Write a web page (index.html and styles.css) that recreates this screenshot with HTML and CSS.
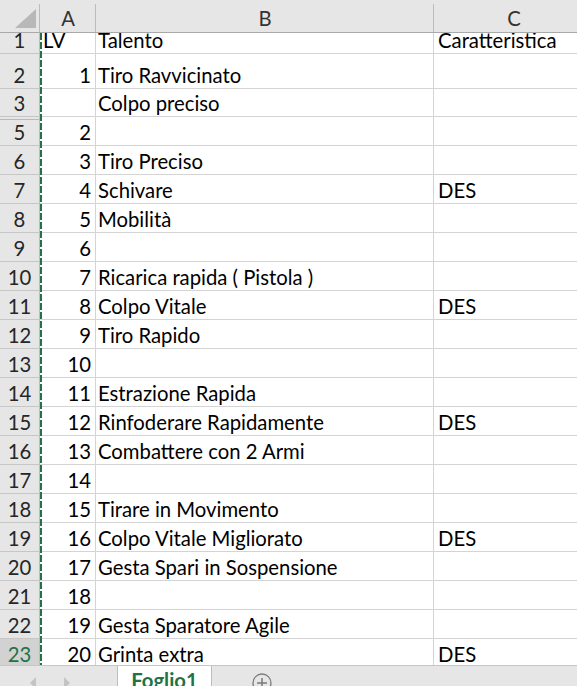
FILE: index.html
```html
<!DOCTYPE html>
<html lang="it">
<head>
<meta charset="utf-8">
<title>Foglio1</title>
<link rel="stylesheet" href="styles.css">
</head>
<body>
<div class="app">
  <div class="sheet">
    <div class="marquee"></div>
    <div class="row head">
      <div class="rh corner"><span class="tri"></span></div>
      <div class="ch">A</div>
      <div class="ch">B</div>
      <div class="ch">C</div>
    </div>
    <div class="row h21"><div class="rh">1</div><div class="c a left">LV</div><div class="c b">Talento</div><div class="c cc">Caratteristica</div></div>
    <div class="row h35"><div class="rh">2</div><div class="c a">1</div><div class="c b">Tiro Ravvicinato</div><div class="c cc"></div></div>
    <div class="row h28"><div class="rh">3</div><div class="c a"></div><div class="c b">Colpo preciso</div><div class="c cc"></div></div>
    <div class="row"><div class="rh hidden-above">5</div><div class="c a">2</div><div class="c b"></div><div class="c cc"></div></div>
    <div class="row"><div class="rh">6</div><div class="c a">3</div><div class="c b">Tiro Preciso</div><div class="c cc"></div></div>
    <div class="row"><div class="rh">7</div><div class="c a">4</div><div class="c b">Schivare</div><div class="c cc">DES</div></div>
    <div class="row"><div class="rh">8</div><div class="c a">5</div><div class="c b">Mobilità</div><div class="c cc"></div></div>
    <div class="row"><div class="rh">9</div><div class="c a">6</div><div class="c b"></div><div class="c cc"></div></div>
    <div class="row"><div class="rh">10</div><div class="c a">7</div><div class="c b">Ricarica rapida ( Pistola )</div><div class="c cc"></div></div>
    <div class="row"><div class="rh">11</div><div class="c a">8</div><div class="c b">Colpo Vitale</div><div class="c cc">DES</div></div>
    <div class="row"><div class="rh">12</div><div class="c a">9</div><div class="c b">Tiro Rapido</div><div class="c cc"></div></div>
    <div class="row"><div class="rh">13</div><div class="c a">10</div><div class="c b"></div><div class="c cc"></div></div>
    <div class="row"><div class="rh">14</div><div class="c a">11</div><div class="c b">Estrazione Rapida</div><div class="c cc"></div></div>
    <div class="row"><div class="rh">15</div><div class="c a">12</div><div class="c b">Rinfoderare Rapidamente</div><div class="c cc">DES</div></div>
    <div class="row"><div class="rh">16</div><div class="c a">13</div><div class="c b">Combattere con 2 Armi</div><div class="c cc"></div></div>
    <div class="row"><div class="rh">17</div><div class="c a">14</div><div class="c b"></div><div class="c cc"></div></div>
    <div class="row"><div class="rh">18</div><div class="c a">15</div><div class="c b">Tirare in Movimento</div><div class="c cc"></div></div>
    <div class="row"><div class="rh">19</div><div class="c a">16</div><div class="c b">Colpo Vitale Migliorato</div><div class="c cc">DES</div></div>
    <div class="row"><div class="rh">20</div><div class="c a">17</div><div class="c b">Gesta Spari in Sospensione</div><div class="c cc"></div></div>
    <div class="row"><div class="rh">21</div><div class="c a">18</div><div class="c b"></div><div class="c cc"></div></div>
    <div class="row"><div class="rh">22</div><div class="c a">19</div><div class="c b">Gesta Sparatore Agile</div><div class="c cc"></div></div>
    <div class="row"><div class="rh active">23</div><div class="c a">20</div><div class="c b">Grinta extra</div><div class="c cc">DES</div></div>
    <div class="row"><div class="rh">24</div><div class="c a"></div><div class="c b"></div><div class="c cc"></div></div>
  </div>
  <div class="tabbar">
    <div class="nav">
      <span class="arrow arrow-left"></span>
      <span class="arrow arrow-right"></span>
    </div>
    <div class="tab">Foglio1</div>
    <div class="add">
      <svg width="20" height="20" viewBox="0 0 20 20"><circle cx="10" cy="10" r="9" fill="none" stroke="#7a7a7a" stroke-width="1.3"/><path d="M10 5v10M5 10h10" stroke="#7a7a7a" stroke-width="1.5"/></svg>
    </div>
  </div>
</div>
</body>
</html>
```

FILE: styles.css
```css
* { box-sizing: border-box; }
html, body { margin: 0; padding: 0; }
body {
  width: 577px;
  height: 686px;
  overflow: hidden;
  background: #fff;
  font-family: "Lato", "Liberation Sans", sans-serif;
  font-size: 20.3px;
  color: #000;
}
.app {
  display: flex;
  flex-direction: column;
  height: 686px;
  overflow: hidden;
}
.sheet {
  position: relative;
  height: 665px;
  overflow: hidden;
  flex: none;
}
.row {
  display: grid;
  grid-template-columns: 40px 56px 338px 160px;
  grid-template-rows: 100%;
  height: 29px;
}
.row > div { min-height: 0; }
.row.head { height: 33px; background: #e6e6e6; }
.row.h21 { height: 21px; }
.row.h35 { height: 35px; }
.row.h28 { height: 28px; }

.rh {
  background: #e6e6e6;
  border-right: 1px solid #bcbcbc;
  border-bottom: 1px solid #c6c6c6;
  display: flex;
  align-items: flex-end;
  justify-content: center;
  padding-bottom: 3px;
  color: #262626;
  line-height: 1;
}
.rh.hidden-above {
  box-shadow: inset 0 2px 0 #e6e6e6, inset 0 3px 0 #b9b9b9;
}
.rh.active {
  background: #d2d2d2;
  color: #217346;
  border-bottom-color: #9f9f9f;
}
.corner {
  border-bottom: 1px solid #a9a9a9;
  border-right: none;
  position: relative;
  padding: 0;
}
.corner::after {
  content: "";
  position: absolute;
  right: 0;
  top: 4px;
  bottom: 0;
  width: 1px;
  background: #bcbcbc;
}
.tri {
  position: absolute;
  left: 15px;
  top: 9px;
  width: 0;
  height: 0;
  border-left: 21px solid transparent;
  border-bottom: 19px solid #b8b8b8;
}
.ch {
  position: relative;
  border-bottom: 1px solid #a9a9a9;
  display: flex;
  align-items: flex-end;
  justify-content: center;
  padding-bottom: 4px;
  color: #333;
  line-height: 1;
}
.ch::after {
  content: "";
  position: absolute;
  right: 0;
  top: 4px;
  bottom: 0;
  width: 1px;
  background: #bcbcbc;
}
.c {
  border-right: 1px solid #d4d4d4;
  border-bottom: 1px solid #d4d4d4;
  display: flex;
  align-items: flex-end;
  padding: 0 2px 3px 2px;
  line-height: 1;
  white-space: nowrap;
}
.c.a { justify-content: flex-end; padding-right: 4px; padding-left: 3px; }
.c.a.left { justify-content: flex-start; }
.c.b { padding-left: 2px; }
.c.cc { padding-left: 4px; }
.marquee {
  position: absolute;
  left: 40px;
  top: 33px;
  width: 2px;
  bottom: 0;
  background: repeating-linear-gradient(to bottom, #217346 0, #217346 7px, transparent 7px, transparent 9px);
  z-index: 2;
}
.tabbar {
  flex: 1;
  display: flex;
  background: #e6e6e6;
  border-top: 1px solid #c6c6c6;
}
.nav {
  width: 118px;
  position: relative;
  border-right: 1px solid #bdbdbd;
}
.arrow {
  position: absolute;
  top: 11px;
  width: 0;
  height: 0;
  border-top: 6px solid transparent;
  border-bottom: 6px solid transparent;
}
.arrow-left { left: 30px; border-right: 6px solid #c4c4c4; }
.arrow-right { left: 64px; border-left: 6px solid #c4c4c4; }
.tab {
  width: 94px;
  background: #fff;
  border-right: 1px solid #bdbdbd;
  color: #217346;
  font-weight: bold;
  text-align: center;
  padding-top: 4px;
  line-height: 1;
}
.add {
  width: 100px;
  display: flex;
  justify-content: center;
  padding-top: 7px;
  padding-right: 0;
}
```
